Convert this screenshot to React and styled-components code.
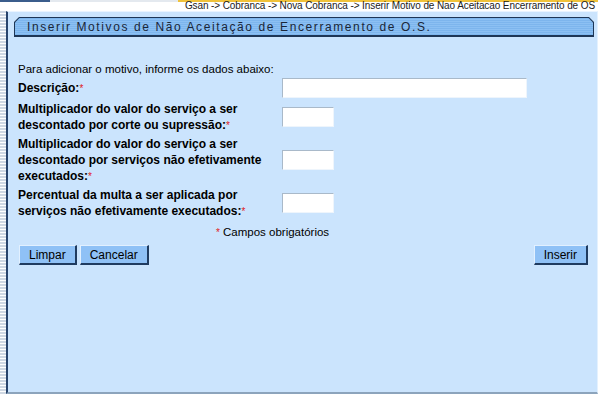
import React from 'react';
import styled, { createGlobalStyle } from 'styled-components';

const GlobalStyle = createGlobalStyle`
  html, body {
    margin: 0;
    padding: 0;
    background: #fff;
  }
  body {
    font-family: "Liberation Sans", Arial, sans-serif;
    font-size: 12px;
    color: #000;
  }
`;

const Page = styled.div`
  width: 598px;
  height: 394px;
  display: flex;
  flex-direction: column;
  overflow: hidden;
`;

const TopBar = styled.div`
  height: 11px;
  flex-shrink: 0;
  background: linear-gradient(to right, #3b5d8c 0 50px, #e4e9ef 50px 178px, #f0c23a 178px) no-repeat top left / 100% 2px;
`;

const Breadcrumb = styled.div`
  text-align: right;
  font-size: 10px;
  letter-spacing: -0.1px;
  line-height: 11px;
  padding-right: 3px;
  color: #1b1b1b;
  white-space: nowrap;
`;

const Body = styled.div`
  flex: 1;
  display: flex;
  min-height: 0;
`;

const LeftStrip = styled.div`
  width: 6px;
  flex-shrink: 0;
  background: repeating-linear-gradient(to bottom, #cfd8e3 0 2px, #fff 2px 3px);
`;

const Panel = styled.div`
  flex: 1;
  background: #cbe4fd;
  border-left: 2px solid #28446c;
  border-top: 1px solid #eaf4ff;
  border-right: 1px solid #e4f1fe;
  border-bottom: 2px solid #8ca4bc;
  display: flex;
  flex-direction: column;
`;

const TabOuter = styled.div`
  margin: 5px 3px 0 6px;
  height: 20px;
  box-sizing: border-box;
  padding: 1px 1px 2px 1px;
  background: #1e3656;
  clip-path: polygon(5px 0, calc(100% - 5px) 0, 100% 5px, 100% 100%, 0 100%, 0 5px);
`;

const TabInner = styled.div`
  height: 100%;
  display: flex;
  align-items: center;
  padding-left: 12px;
  background: repeating-linear-gradient(to bottom, #7db5ed 0 1px, #8cc0f3 1px 2px);
  clip-path: polygon(4.5px 0, calc(100% - 4.5px) 0, 100% 4.5px, 100% 100%, 0 100%, 0 4.5px);
`;

const Title = styled.h1`
  margin: 0;
  font-size: 12px;
  font-weight: normal;
  letter-spacing: 1.6px;
  color: #1a2638;
  white-space: nowrap;
`;

const Content = styled.div`
  padding: 24px 9px 0 10px;
`;

const Intro = styled.p`
  margin: 0 0 1px;
  font-size: 11.5px;
  line-height: 16px;
`;

const FormGrid = styled.div`
  width: 509px;
  display: grid;
  grid-template-columns: 264px 245px;
  row-gap: 3px;
  align-items: center;
`;

const Label = styled.label`
  font-weight: bold;
  line-height: 16px;
  padding-right: 4px;
`;

const Required = styled.span`
  color: #e0201a;
  font-size: 10px;
  font-weight: normal;
  line-height: 1;
`;

const Field = styled.input`
  width: ${p => p.$w}px;
  height: 20px;
  box-sizing: border-box;
  border: 1px solid;
  border-color: #a9b9c9 #eef5fc #eef5fc #a9b9c9;
  background: #fff;
  padding: 0 3px;
  font: 12px "Liberation Sans", Arial, sans-serif;
`;

const Note = styled.div`
  grid-column: 1 / -1;
  text-align: center;
  font-size: 11.5px;
  line-height: 16px;
  margin-top: 2px;
`;

const Actions = styled.div`
  display: flex;
  justify-content: space-between;
  margin-top: 5px;
  padding-left: 1px;
`;

const ButtonGroup = styled.div`
  display: flex;
  gap: 3px;
`;

const Button = styled.button`
  height: 20px;
  padding: 0 9px;
  box-sizing: border-box;
  background: #8fc1f6;
  border-style: solid;
  border-width: 1px 2px 2px 1px;
  border-color: #e2f0ff #1f3b60 #1f3b60 #e2f0ff;
  font: 12px "Liberation Sans", Arial, sans-serif;
  color: #000;
  line-height: 16px;
  cursor: pointer;
`;

const fields = [
  { label: 'Descrição:', w: 245 },
  { label: 'Multiplicador do valor do serviço a ser descontado por corte ou supressão:', w: 52 },
  { label: 'Multiplicador do valor do serviço a ser descontado por serviços não efetivamente executados:', w: 52 },
  { label: 'Percentual da multa a ser aplicada por serviços não efetivamente executados:', w: 52 },
];

export default function App() {
  return (
    <Page>
      <GlobalStyle />
      <TopBar>
        <Breadcrumb>Gsan -&gt; Cobranca -&gt; Nova Cobranca -&gt; Inserir Motivo de Nao Aceitacao Encerramento de OS</Breadcrumb>
      </TopBar>
      <Body>
        <LeftStrip />
        <Panel>
          <TabOuter>
            <TabInner>
              <Title>Inserir Motivos de Não Aceitação de Encerramento de O.S.</Title>
            </TabInner>
          </TabOuter>
          <Content>
            <Intro>Para adicionar o motivo, informe os dados abaixo:</Intro>
            <FormGrid>
              {fields.map((f, i) => (
                <React.Fragment key={i}>
                  <Label>{f.label}<Required>*</Required></Label>
                  <Field $w={f.w} type="text" />
                </React.Fragment>
              ))}
              <Note><Required>*</Required> Campos obrigatórios</Note>
            </FormGrid>
            <Actions>
              <ButtonGroup>
                <Button>Limpar</Button>
                <Button>Cancelar</Button>
              </ButtonGroup>
              <Button>Inserir</Button>
            </Actions>
          </Content>
        </Panel>
      </Body>
    </Page>
  );
}
